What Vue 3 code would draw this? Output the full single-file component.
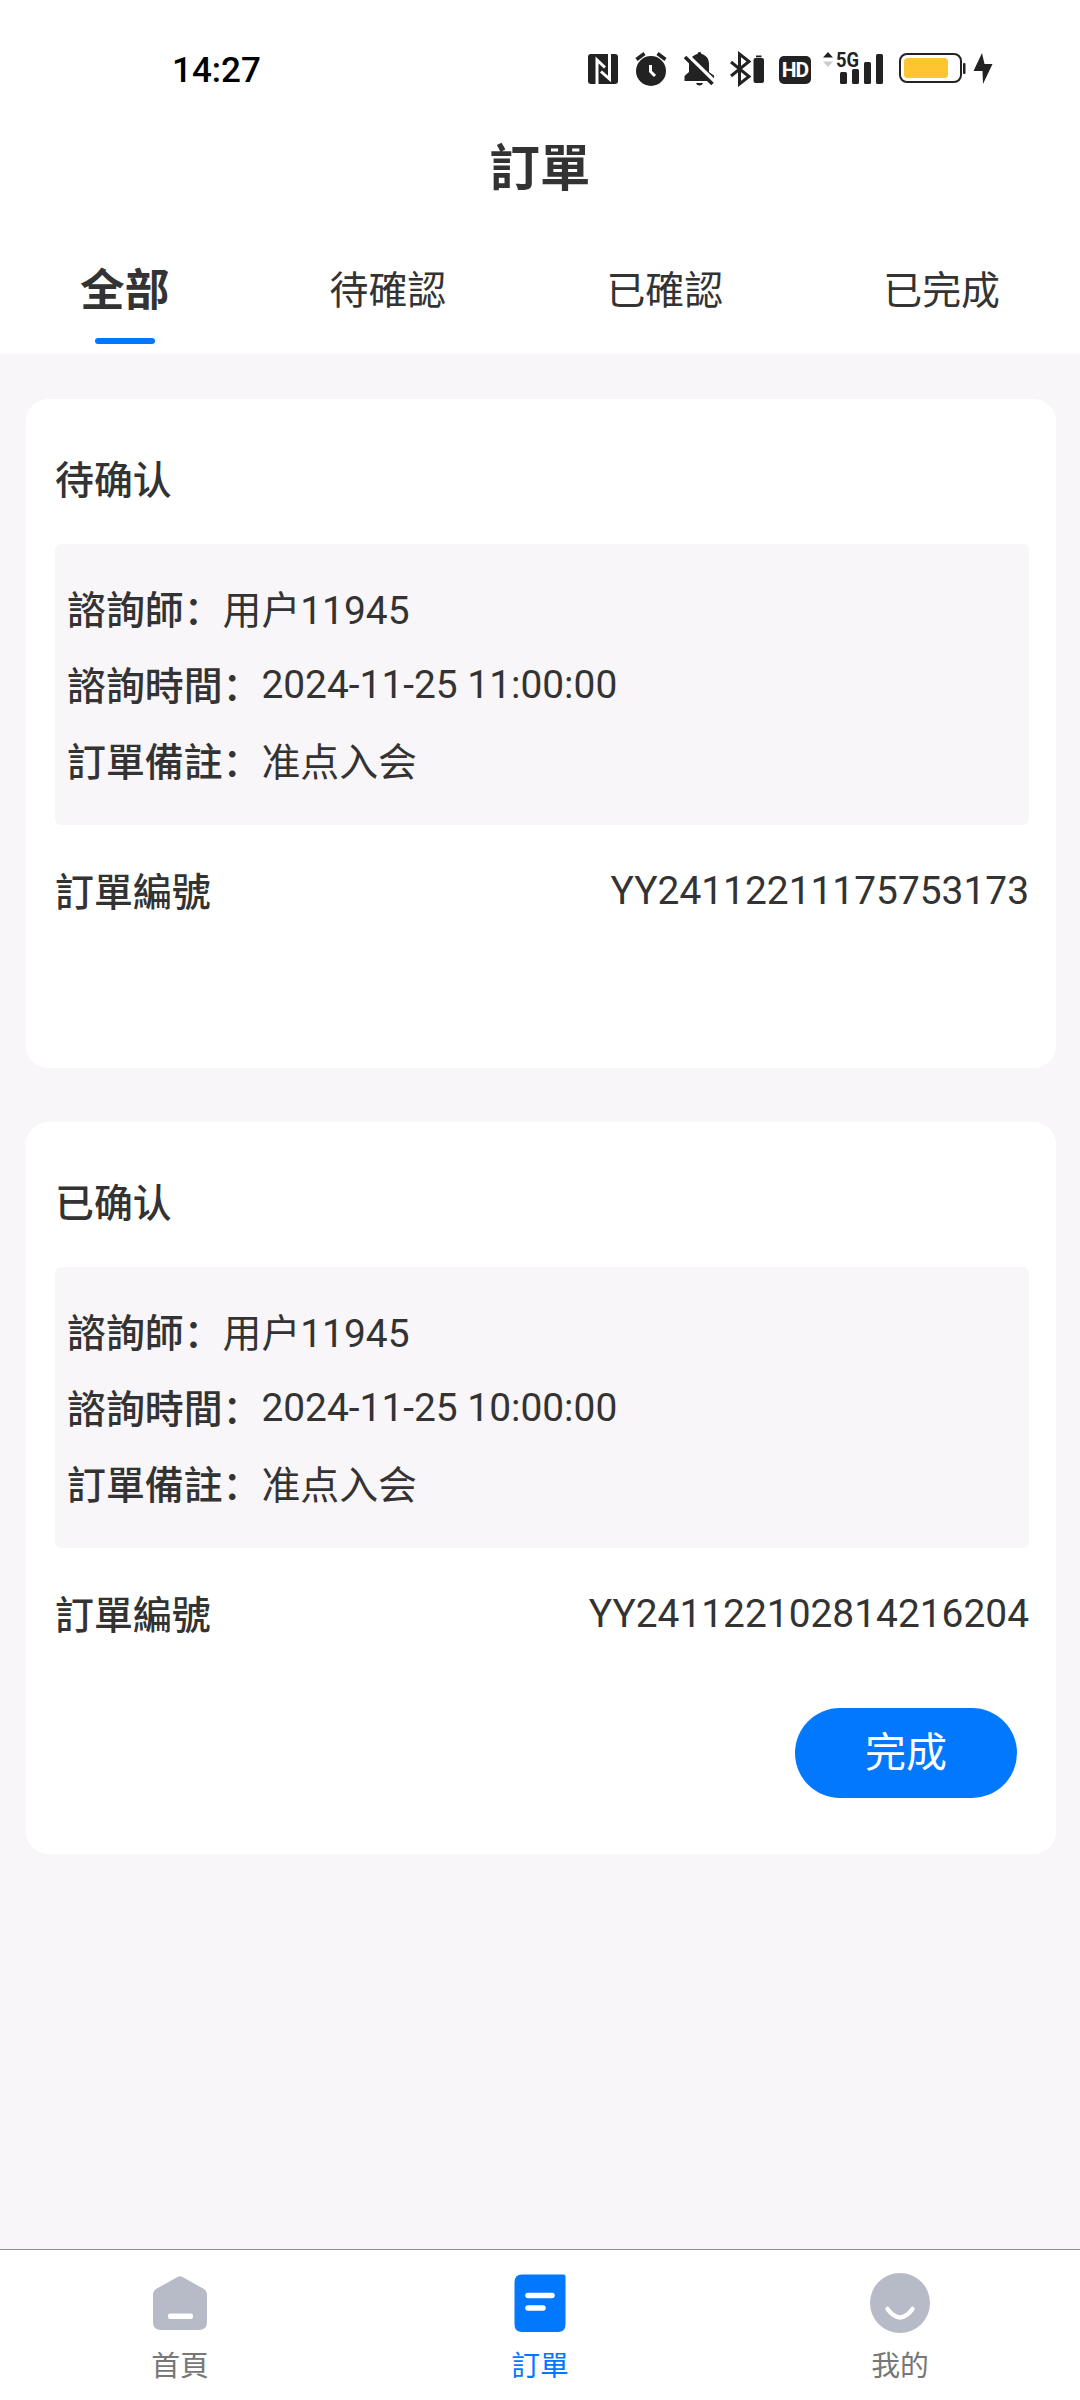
<!--
  App.vue - 訂單列表頁
  包含系統狀態列、狀態分頁、訂單卡片與底部導覽
-->
<template>
  <div class="page">
    <header class="header">
      <!-- 狀態列 -->
      <div class="status">
        <span class="status__time">14:27</span>
        <div class="status__icons">
          <!-- NFC -->
          <svg width="30" height="36" viewBox="0 0 30 36" fill="none">
            <rect y="3" width="30" height="30" rx="3" fill="#222" />
            <path d="M9 33V9l8 7.500M21.500 3v25L13 20.500" stroke="#fff" stroke-width="3" />
          </svg>
          <!-- 鬧鐘 -->
          <svg class="status__alarm" width="32" height="36" viewBox="0 0 32 36" fill="none">
            <circle cx="16" cy="20" r="15" fill="#222" />
            <path d="M1.500 8.500l8-6M22.500 2.500l8 6" stroke="#222" stroke-width="3.500" />
            <path d="M15.500 14v6.500l4.500 4.500" stroke="#fff" stroke-width="3" />
          </svg>
          <!-- 靜音 -->
          <svg class="status__bell" width="31" height="36" viewBox="0 0 31 36">
            <path d="M13.500 3a2 2 0 0 1 4 0c5 1.300 7.500 5 7.500 10v8l5 3.500V30H.500v-5L5 21v-8c0-5 3.500-8.700 8.500-10z" fill="#222" />
            <path d="M12 32h7c-.6 1.700-1.800 2.500-3.500 2.500S12.600 33.700 12 32z" fill="#222" />
            <path d="M3 4l29 28" stroke="#fff" stroke-width="4" />
            <path d="M1 6l27.500 27" stroke="#222" stroke-width="3.500" />
          </svg>
          <!-- 藍牙與電量 -->
          <svg class="status__bt" width="34" height="36" viewBox="0 0 34 36" fill="none">
            <path d="M1 11l18 14.500L9.500 33V3L19 10.500 1 25" stroke="#222" stroke-width="3" />
            <rect x="23.500" y="7" width="10.500" height="25" rx="2" fill="#222" />
            <rect x="26" y="4.500" width="5.500" height="1.800" fill="#222" />
          </svg>
          <!-- HD -->
          <span class="status__hd">HD</span>
          <!-- 5G 訊號 -->
          <svg class="status__signal" width="60" height="36" viewBox="0 0 60 36" fill="#222">
            <path d="M5 1l5 5.500H0z" />
            <path d="M0 10.500h10L5 16z" fill="#ccc" />
            <text x="13" y="16" class="status__5g" textLength="23" lengthAdjust="spacingAndGlyphs">5G</text>
            <rect x="17" y="21" width="7" height="12" rx="1.500" />
            <rect x="29" y="18" width="7" height="15" rx="1.500" />
            <rect x="41" y="11" width="7" height="22" rx="1.500" />
            <rect x="53" y="3" width="7" height="30" rx="1.500" />
          </svg>
          <!-- 電池 -->
          <svg class="status__battery" width="67" height="36" viewBox="0 0 67 36" fill="none">
            <rect x="1" y="3" width="61" height="28" rx="7" stroke="#222" stroke-width="2" />
            <rect x="5" y="7" width="44" height="20" rx="3.500" fill="#ffc531" />
            <rect x="64" y="12" width="2.500" height="11" rx="1" fill="#222" />
          </svg>
          <!-- 充電 -->
          <svg class="status__bolt" width="20" height="36" viewBox="0 0 20 36">
            <path d="M9 2L.500 20H9.500L10 33 19.500 13H11.500L9 2z" fill="#222" />
          </svg>
        </div>
      </div>

      <h1 class="title">訂單</h1>

      <!-- 訂單狀態分頁 -->
      <nav class="tabs">
        <button
          v-for="(tab, i) in tabs"
          :key="tab"
          class="tabs__item"
          :class="{ 'tabs__item--active': i === activeTab }"
          @click="activeTab = i"
        >
          <span class="tabs__text">{{ tab }}</span>
          <span v-if="i === activeTab" class="tabs__line"></span>
        </button>
      </nav>
    </header>

    <!-- 訂單列表 -->
    <main class="list">
      <section
        v-for="order in visibleOrders"
        :key="order.no"
        class="card"
      >
        <h2 class="card__status">{{ order.status }}</h2>
        <div class="card__info">
          <div class="card__row">
            <span class="card__label">諮詢師：</span>
            <span class="card__value">{{ order.consultant }}</span>
          </div>
          <div class="card__row">
            <span class="card__label">諮詢時間：</span>
            <span class="card__value card__value--time">{{ order.time }}</span>
          </div>
          <div class="card__row">
            <span class="card__label">訂單備註：</span>
            <span class="card__value">{{ order.remark }}</span>
          </div>
        </div>
        <div class="card__no">
          <span class="card__label">訂單編號</span>
          <span class="card__number">{{ order.no }}</span>
        </div>
        <!-- 已確認的訂單才可完成 -->
        <div class="card__footer">
          <button v-if="order.canFinish" class="card__btn">完成</button>
        </div>
      </section>
    </main>

    <!-- 底部導覽 -->
    <footer class="tabbar">
      <div class="tabbar__item">
        <svg width="60" height="60" viewBox="0 0 60 60">
          <path d="M27.500 4Q30 2.500 32.500 4L54 16q3 2 3 5v28q0 8-8 8H11q-8 0-8-8V21q0-3 3-5z" fill="#b6bbc7" />
          <rect x="18" y="40.500" width="25" height="5.500" rx="2" fill="#fff" />
        </svg>
        <span>首頁</span>
      </div>
      <div class="tabbar__item tabbar__item--active">
        <svg width="60" height="60" viewBox="0 0 60 60">
          <path d="M12 1.500h41.500q2 0 2 2V51q0 8-7.500 8H12q-7.500 0-7.500-8V9.500q0-8 7.500-8z" fill="#0278ff" />
          <path d="M18 22.500h24M18 35h15" stroke="#fff" stroke-width="5.500" stroke-linecap="round" />
        </svg>
        <span>訂單</span>
      </div>
      <div class="tabbar__item">
        <svg width="60" height="60" viewBox="0 0 60 60" fill="none">
          <circle cx="30" cy="30" r="30" fill="#b6bbc7" />
          <path d="M17.500 36q12.500 17 25 0" stroke="#fff" stroke-width="4.500" stroke-linecap="round" />
        </svg>
        <span>我的</span>
      </div>
    </footer>
  </div>
</template>

<script setup>
import { ref, computed } from 'vue'

const tabs = ['全部', '待確認', '已確認', '已完成']
const activeTab = ref(0)

const orders = ref([
  {
    tab: 1,
    status: '待确认',
    consultant: '用户11945',
    time: '2024-11-25 11:00:00',
    remark: '准点入会',
    no: 'YY24112211175753173',
    canFinish: false,
  },
  {
    tab: 2,
    status: '已确认',
    consultant: '用户11945',
    time: '2024-11-25 10:00:00',
    remark: '准点入会',
    no: 'YY241122102814216204',
    canFinish: true,
  },
])

// 「全部」顯示所有訂單，其餘依狀態篩選
const visibleOrders = computed(() =>
  activeTab.value === 0 ? orders.value : orders.value.filter((o) => o.tab === activeTab.value)
)
</script>

<style>
body {
  margin: 0;
  background: #f8f6f8;
}
</style>

<style scoped>
.page {
  display: flex;
  flex-direction: column;
  height: 2400px;
  background: #f8f6f8;
  color: #333;
  font-family: Roboto, "Noto Sans CJK SC", sans-serif;
  font-size: 38.88px;
}
button {
  padding: 0;
  border: none;
  background: none;
  color: inherit;
  font: inherit;
  cursor: pointer;
}
.header {
  height: 354px;
  background: #fff;
}
.status {
  display: flex;
  justify-content: space-between;
  box-sizing: border-box;
  height: 120px;
  padding: 51px 87px 0 172px;
}
.status__time {
  color: #000;
  font-size: 35px;
  font-weight: 500;
  line-height: 39px;
}
.status__icons {
  display: flex;
  height: 36px;
}
.status__alarm {
  margin-left: 17px;
}
.status__bell {
  margin-left: 17px;
}
.status__bt {
  margin-left: 15px;
}
.status__hd {
  width: 32px;
  height: 28px;
  margin: 5px 0 0 15px;
  border-radius: 5px;
  background: #222;
  color: #fff;
  font-size: 21px;
  font-weight: 700;
  line-height: 28px;
  text-align: center;
  letter-spacing: -1px;
}
.status__signal {
  margin-left: 12px;
  overflow: visible;
}
.status__5g {
  font-size: 20px;
  font-weight: 700;
}
.status__battery {
  margin-left: 16px;
}
.status__bolt {
  margin-left: 7px;
}
.title {
  margin: 0;
  padding-top: 14px;
  font-size: 50.400px;
  font-weight: 700;
  line-height: 70px;
  text-align: center;
}
.tabs {
  display: flex;
  justify-content: space-around;
  height: 150px;
}
.tabs__item {
  display: flex;
  flex-direction: column;
  align-items: center;
  padding-top: 57px;
}
.tabs__text {
  line-height: 60px;
}
.tabs__item--active {
  font-size: 44.600px;
  font-weight: 700;
}
.tabs__line {
  width: 60px;
  height: 6px;
  margin-top: 17px;
  border-radius: 3px;
  background: #0278ff;
}
.list {
  display: flex;
  flex: 1;
  flex-direction: column;
  gap: 54px;
  padding: 45px 24px 0 26px;
}
.card {
  padding: 52px 27px 25px 29px;
  border-radius: 22px;
  background: #fff;
}
.card__status {
  margin: 0 0 33px;
  font-size: 38.88px;
  font-weight: 500;
  line-height: 60px;
}
.card__info {
  box-sizing: border-box;
  height: 281px;
  padding: 29px 12px 0;
  border-radius: 6px;
  background: #f8f6f8;
}
.card__row {
  display: flex;
  height: 76px;
  line-height: 76px;
}
.card__label {
  font-weight: 500;
}
.card__value--time {
  line-height: 72px;
}
.card__no {
  display: flex;
  justify-content: space-between;
  margin-top: 38px;
  line-height: 60px;
}
.card__number {
  line-height: 56px;
}
.card__footer {
  display: flex;
  justify-content: flex-end;
  min-height: 120px;
  padding-right: 12px;
}
.card__btn {
  width: 222px;
  height: 90px;
  margin: 62px 0 31px;
  border-radius: 45px;
  background: #0278ff;
  color: #fff;
  font-size: 41px;
  line-height: 86px;
}
.tabbar {
  display: flex;
  box-sizing: border-box;
  height: 151px;
  border-top: 1px solid #918e92;
  background: #fff;
}
.tabbar__item {
  display: flex;
  flex: 1;
  flex-direction: column;
  align-items: center;
  padding-top: 23px;
  color: #777;
  font-size: 28.800px;
  line-height: 40px;
}
.tabbar__item span {
  margin-top: 13px;
}
.tabbar__item--active {
  color: #0278ff;
}
</style>
